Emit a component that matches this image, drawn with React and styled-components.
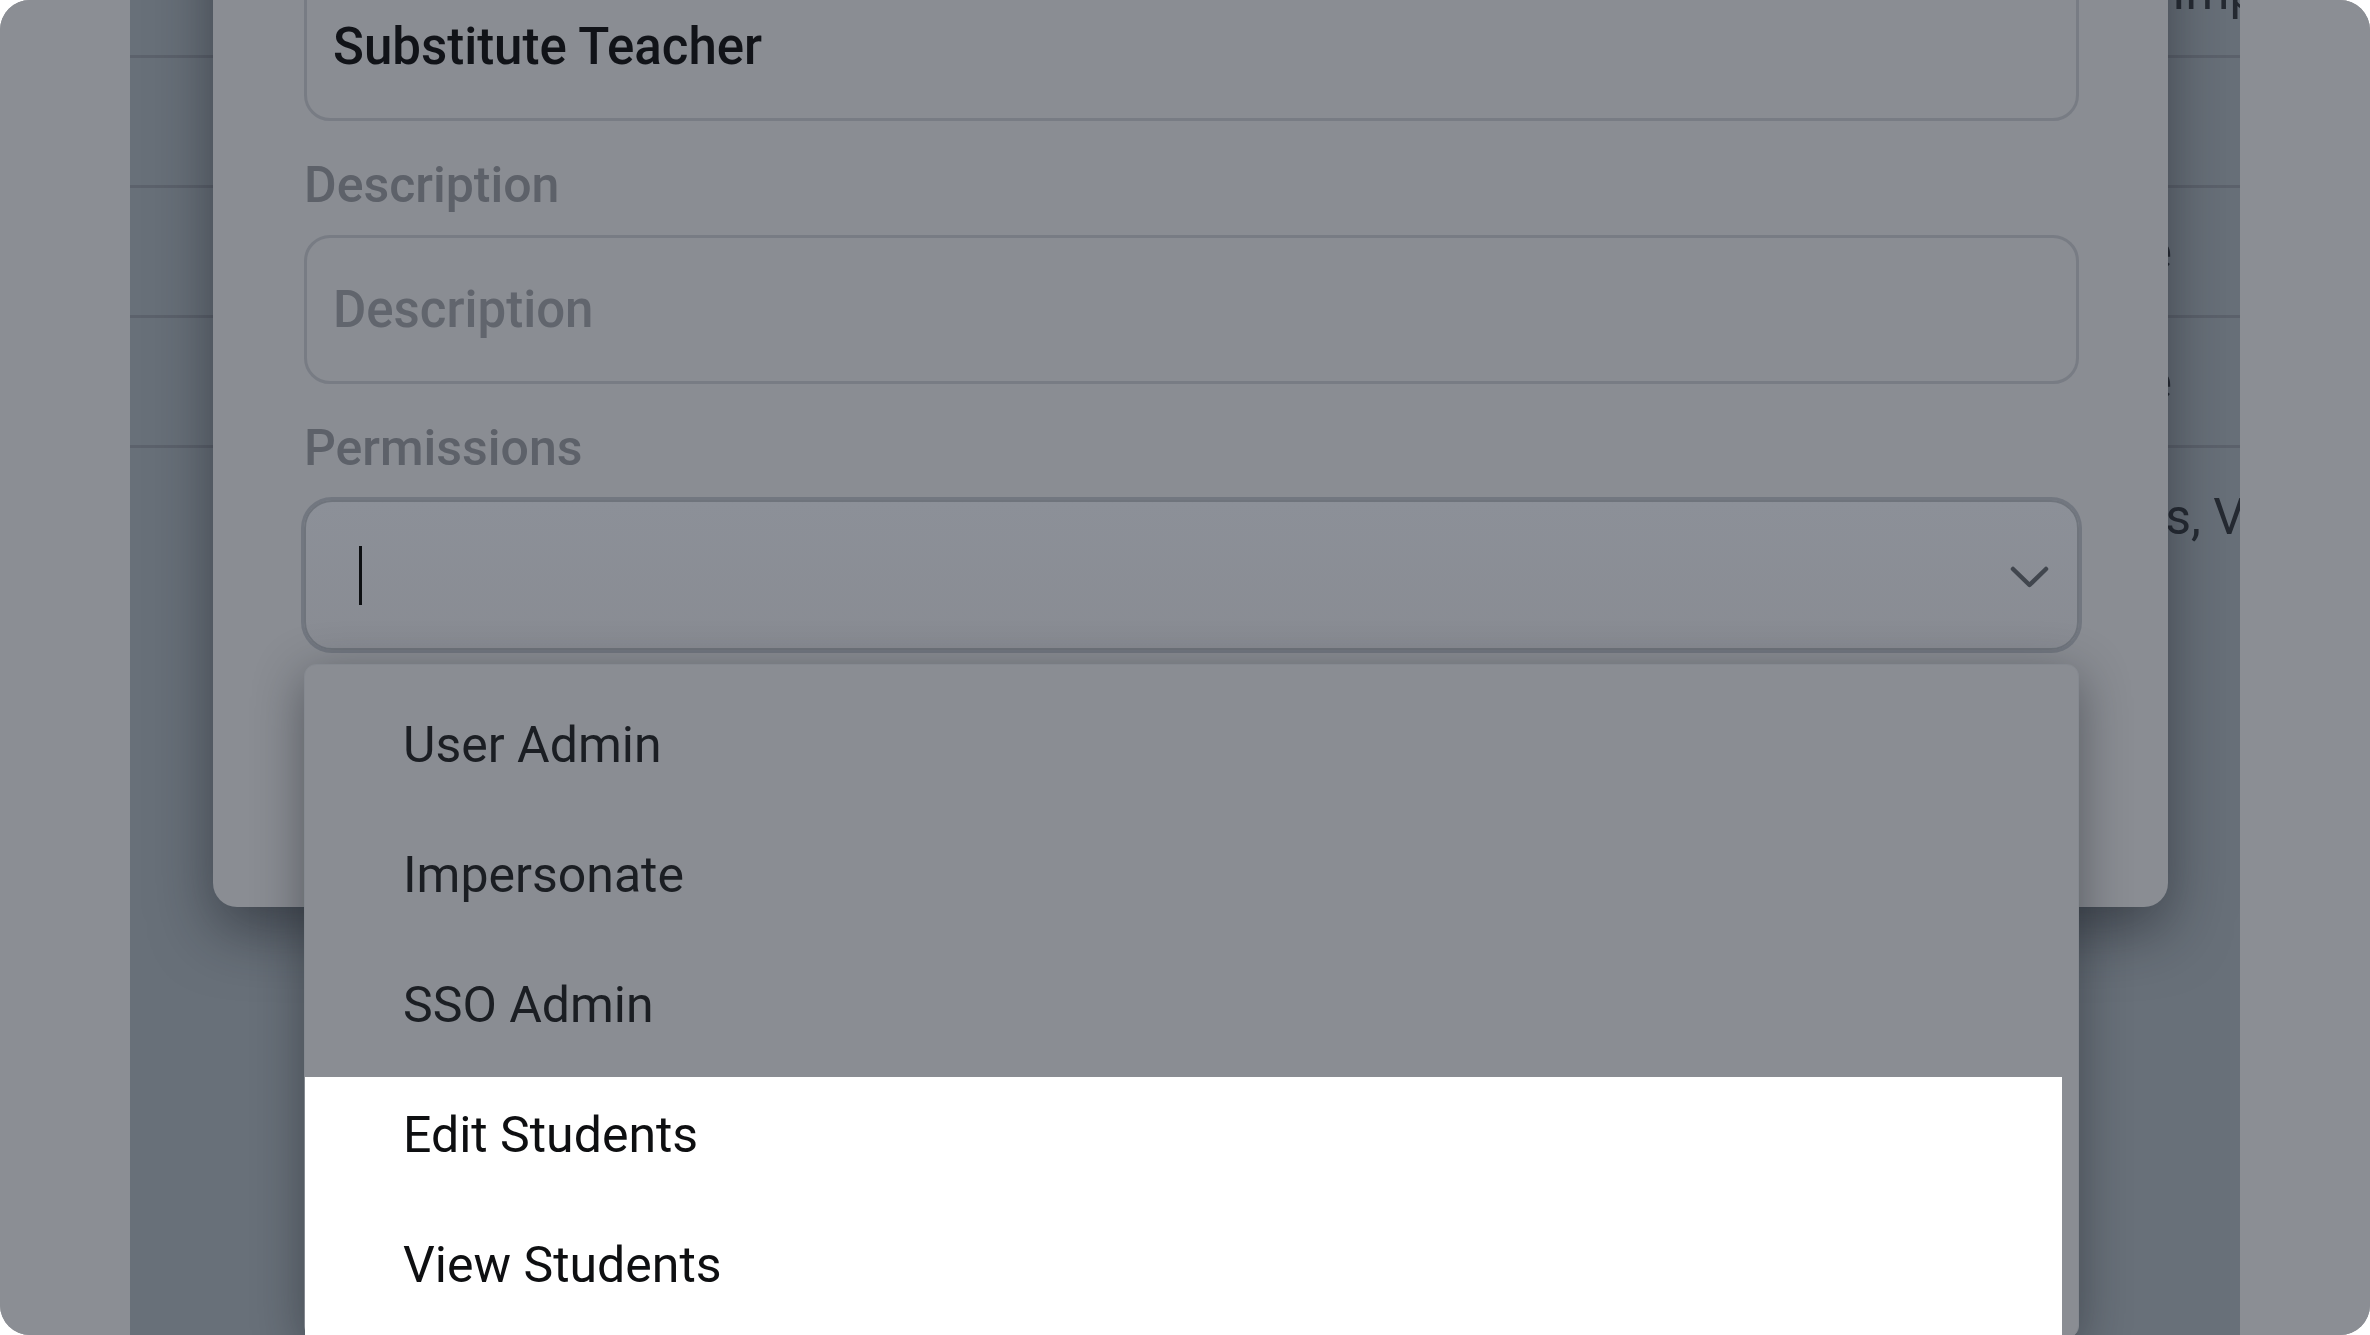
import styled, { createGlobalStyle } from 'styled-components'

const GlobalStyle = createGlobalStyle`
  html, body {
    margin: 0;
    padding: 0;
    background: #ffffff;
  }
  body {
    font-family: Roboto, "Liberation Sans", sans-serif;
  }
  #root {
    width: 100vw;
    height: 100vh;
  }
`

const Frame = styled.div`
  width: 100vw;
  height: 100vh;
  border-radius: 30px;
  overflow: hidden;
  background: #8b8e94;
  display: flex;
`

const Gutter = styled.div`
  width: ${p => p.$w}px;
  flex-shrink: 0;
  background: #8b8e94;
`

const Page = styled.div`
  flex: 1;
  position: relative;
  overflow: hidden;
  background: #687079;
`

const Table = styled.div`
  display: flex;
  flex-direction: column;
  margin-top: -72px;
`

const Row = styled.div`
  height: ${p => p.$h || 130}px;
  box-sizing: border-box;
  border-bottom: 3px solid #5c626c;
  display: flex;
  align-items: ${p => (p.$top ? 'flex-start' : 'center')};
  padding-top: ${p => (p.$top ? 40 : 0)}px;
`

const Cell = styled.div`
  padding-left: ${p => p.$start}px;
  font-size: 50px;
  color: #252a32;
  white-space: nowrap;
`

const Modal = styled.div`
  position: absolute;
  top: -160px;
  left: 83px;
  right: 72px;
  height: 1067px;
  box-sizing: border-box;
  padding: 52px 89px 0 91px;
  background: #8a8d93;
  border-radius: 24px;
  box-shadow: 0 24px 60px rgba(20, 24, 32, 0.5);
  display: flex;
  flex-direction: column;
`

const Field = styled.div`
  display: flex;
  flex-direction: column;
  margin-bottom: 34px;
  position: relative;
`

const Label = styled.label`
  font-size: 50px;
  line-height: 60px;
  font-weight: 500;
  color: #5d6169;
  margin-bottom: ${p => p.$gap || 20}px;
`

const Input = styled.div`
  height: 149px;
  box-sizing: border-box;
  border: 3px solid #787c84;
  border-radius: 26px;
  padding-left: 26px;
  display: flex;
  align-items: center;
  font-size: 51px;
  font-weight: 500;
  color: ${p => (p.$placeholder ? '#61656d' : '#111318')};
`

const Select = styled.div`
  height: 150px;
  box-sizing: border-box;
  border: 2px solid #6f747c;
  box-shadow: 0 0 0 3px #727780;
  border-radius: 28px;
  padding: 0 27px 0 53px;
  display: flex;
  align-items: center;
  justify-content: space-between;
  background: linear-gradient(#8c9098, #898c93);
`

const Caret = styled.span`
  width: 3px;
  height: 59px;
  background: #0d0f12;
`

const Chevron = styled.svg`
  width: 41px;
  height: 24px;
  margin-top: 4px;
`

const Menu = styled.div`
  position: absolute;
  top: calc(100% + 14px);
  left: 0;
  right: 0;
  box-sizing: border-box;
  padding-top: 22px;
  background: #8a8d93;
  border: 1px solid #858990;
  border-radius: 12px;
  box-shadow: 0 12px 50px rgba(20, 24, 32, 0.45);
  display: flex;
  flex-direction: column;
`

const Option = styled.div`
  height: 130px;
  box-sizing: border-box;
  padding: 0 0 14px 98px;
  margin-right: ${p => (p.$lit ? 16 : 0)}px;
  display: flex;
  align-items: center;
  font-size: 50px;
  color: ${p => (p.$lit ? '#0e0f11' : '#1b1e23')};
  background: ${p => (p.$lit ? '#ffffff' : 'transparent')};
`

const options = [
  { name: 'User Admin' },
  { name: 'Impersonate' },
  { name: 'SSO Admin' },
  { name: 'Edit Students', lit: true },
  { name: 'View Students', lit: true },
]

export default function App() {
  return (
    <>
      <GlobalStyle />
      <Frame>
        <Gutter $w={130} />
        <Page>
          <Table>
            <Row>
              <Cell $start={2042}>Impersonate</Cell>
            </Row>
            <Row>
              <Cell $start={1700}>Teacher</Cell>
            </Row>
            <Row>
              <Cell $start={1944}>Role</Cell>
            </Row>
            <Row>
              <Cell $start={1944}>Role</Cell>
            </Row>
            <Row $h={1000} $top>
              <Cell $start={1863}>Students, View Students</Cell>
            </Row>
          </Table>

          <Modal>
            <Field>
              <Label>Name</Label>
              <Input>Substitute Teacher</Input>
            </Field>
            <Field>
              <Label>Description</Label>
              <Input $placeholder>Description</Input>
            </Field>
            <Field>
              <Label $gap={22}>Permissions</Label>
              <Select>
                <Caret />
                <Chevron viewBox="0 0 41 24" fill="none">
                  <polyline
                    points="4,4 20.5,20 37,4"
                    stroke="#41464e"
                    strokeWidth="4.5"
                    strokeLinecap="round"
                    strokeLinejoin="round"
                  />
                </Chevron>
              </Select>
              <Menu>
                {options.map(o => (
                  <Option key={o.name} $lit={o.lit}>
                    {o.name}
                  </Option>
                ))}
              </Menu>
            </Field>
          </Modal>
        </Page>
        <Gutter $w={130} />
      </Frame>
    </>
  )
}
